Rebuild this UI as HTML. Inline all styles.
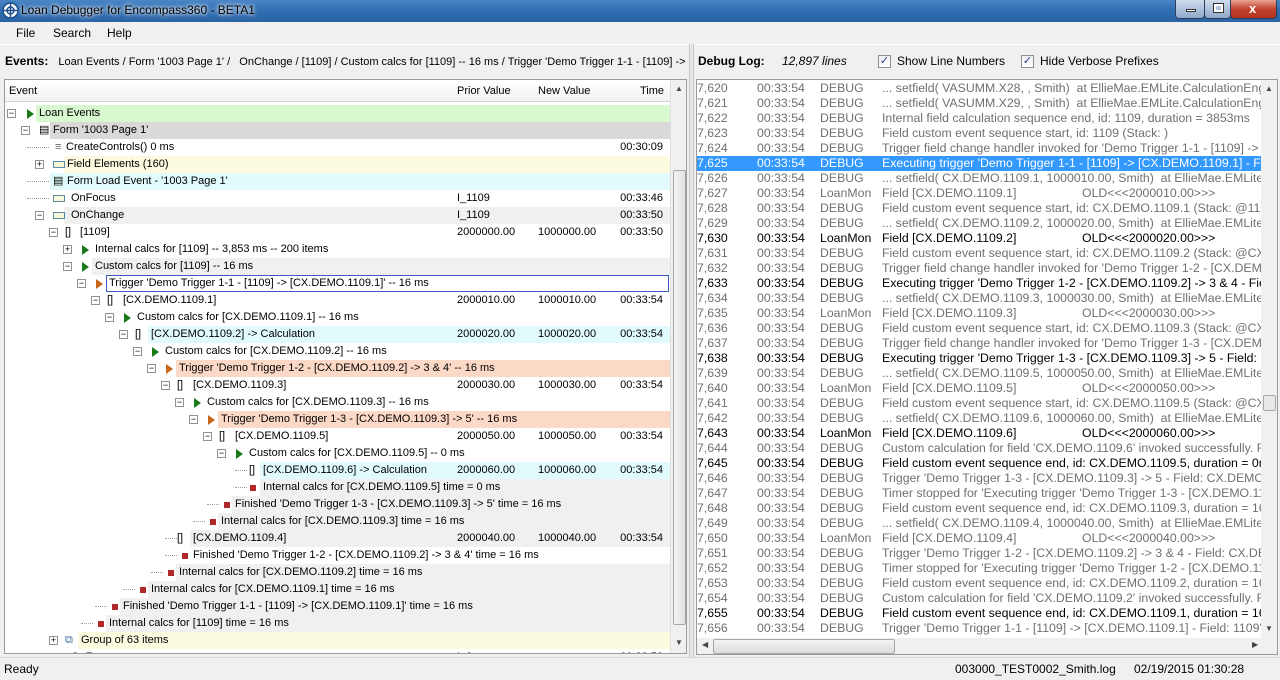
<!DOCTYPE html>
<html><head><meta charset="utf-8"><style>
*{margin:0;padding:0;box-sizing:border-box}
body{width:1280px;height:680px;overflow:hidden;background:#f0f0f0;font-family:"Liberation Sans",sans-serif;font-size:12px;color:#000;position:relative}
.abs{position:absolute}
#title{left:0;top:0;width:1280px;height:22px;background:linear-gradient(#4a86c6,#2f6cb0 50%,#2a64a6);color:#000}
#title .t{position:absolute;left:21px;top:3px;font-size:12px;color:#000;text-shadow:0 0 6px #fff,0 0 3px #fff}
.wb{position:absolute;top:0;height:19px;border:1px solid #2b3f5c;border-top:none;border-radius:0 0 4px 4px;background:linear-gradient(#cfdcec,#8fa9c9);}
#menu{left:0;top:22px;width:1280px;height:22px;}
#menu span{position:absolute;top:4px;font-size:12px}
.tree{left:4px;top:79px;width:683px;height:575px;background:#fff;border:1px solid #9a9a9a;overflow:hidden;font-size:11px}
.hdr{position:absolute;left:0;top:0;width:665px;height:22px;background:linear-gradient(#fff,#f2f2f2);border-bottom:1px solid #d5d5d5}
.hdr span{position:absolute;top:5px}
.r{position:absolute;left:0;width:665px;height:17px;line-height:17px;white-space:nowrap}
.bg{position:absolute;top:0;height:17px;right:0}
.bx{position:absolute;top:4px;width:9px;height:9px;border:1px solid #919191;background:#fff;font-size:9px;line-height:6px;text-align:center;color:#000}
.tx{position:absolute;top:0}
.gt{position:absolute;top:4px;width:0;height:0;border-top:5px solid transparent;border-bottom:5px solid transparent;border-left:7px solid #1a7a1a}
.ot{position:absolute;top:4px;width:0;height:0;border-top:5px solid transparent;border-bottom:5px solid transparent;border-left:7px solid #c8661a}
.rs{position:absolute;top:6px;width:6px;height:6px;background:#b0282a}
.c1{position:absolute;left:452px}.c2{position:absolute;left:533px}.c3{position:absolute;right:7px}
.dl{position:absolute;top:8px;height:0;border-top:1px dotted #a0a0a0}
.vs{position:absolute;left:665px;top:0;width:17px;height:573px;background:#f0f0f0;border-left:1px solid #e0e0e0}
.log{left:696px;top:79px;width:582px;height:576px;background:#fff;border:1px solid #9a9a9a;overflow:hidden;font-size:12.3px}
.lr{position:absolute;left:0;width:564px;height:15px;line-height:15px;white-space:nowrap;color:#707070;overflow:hidden}
.lr span{position:absolute}
.lr .a{left:0}.lr .b{left:60px}.lr .c{left:123px}.lr .d{left:185px}
.dk{color:#000}
.sel{background:#3399ff;color:#fff}
.cb{position:absolute;top:55px;width:13px;height:13px;border:1px solid #8f8f8f;background:linear-gradient(#eee,#fff);font-size:11px;line-height:11px;text-align:center;color:#233f8f}
</style></head><body>
<div id="title" class="abs">
<svg class="abs" style="left:2px;top:2px" width="17" height="17" viewBox="0 0 17 17"><circle cx="8.5" cy="8.5" r="7.5" fill="#fff" stroke="#1d4f8c" stroke-width="1.5"/><circle cx="8.5" cy="8.5" r="3.5" fill="none" stroke="#1d4f8c" stroke-width="1.5"/><path d="M8.5 1v15M1 8.5h15" stroke="#1d4f8c" stroke-width="1.5"/></svg>
<span class="t">Loan Debugger for Encompass360 - BETA1</span>
<div class="wb" style="left:1175px;width:30px"><div style="position:absolute;left:10px;top:9px;width:10px;height:3px;background:#fff;border:1px solid #333"></div></div>
<div class="wb" style="left:1204px;width:27px"><div style="position:absolute;left:9px;top:4px;width:9px;height:8px;border:2px solid #fff;outline:1px solid #333"></div></div>
<div class="wb" style="left:1230px;width:47px;background:linear-gradient(#e8a593,#c4412c 50%,#b23420)"><span style="position:absolute;left:18px;top:1px;color:#fff;font-weight:bold;font-size:13px">x</span></div>
</div>
<div id="menu" class="abs"><span style="left:16px">File</span><span style="left:53px">Search</span><span style="left:107px">Help</span></div>
<div class="abs" style="left:0;top:44px;width:1280px;height:1px;background:#fff"></div>
<div class="abs" style="left:5px;top:54px;white-space:nowrap;width:680px;overflow:hidden"><b style="font-size:12px">Events:</b>&nbsp;&nbsp; <span style="font-size:11px">Loan Events / Form '1003 Page 1' /&nbsp;&nbsp; OnChange / [1109] / Custom calcs for [1109] -- 16 ms / Trigger 'Demo Trigger 1-1 - [1109] -&gt; [C</span></div>
<div class="abs" style="left:698px;top:54px;white-space:nowrap"><b>Debug Log:</b></div>
<div class="abs" style="left:782px;top:54px;font-style:italic">12,897 lines</div>
<div class="cb" style="left:878px">✓</div><div class="abs" style="left:897px;top:54px">Show Line Numbers</div>
<div class="cb" style="left:1021px">✓</div><div class="abs" style="left:1040px;top:54px">Hide Verbose Prefixes</div>
<div class="abs" style="left:689px;top:44px;width:5px;height:614px;background:#e6e6e6;border-left:1px solid #c8c8c8;border-right:1px solid #c8c8c8"></div>

<div class="tree abs">
<div class="hdr"><span style="left:4px">Event</span><span style="left:452px">Prior Value</span><span style="left:533px">New Value</span><span style="right:6px">Time</span></div>
<div style="position:absolute;left:0;top:-79px">
<div class="r" style="top:104px"><div class="bg" style="left:31px;background:#d8f8d0"></div><div class="bx" style="left:2px">−</div><div class="gt" style="left:22px"></div><span class="tx" style="left:34px">Loan Events</span></div>
<div class="r" style="top:121px"><div class="bg" style="left:45px;background:#d9d9d9"></div><div class="bx" style="left:16px">−</div><span class="tx" style="left:34px">▤</span><span class="tx" style="left:48px">Form '1003 Page 1'</span></div>
<div class="r" style="top:138px"><div class="dl" style="left:22px;width:22px"></div><span class="tx" style="left:50px;color:#666">≡</span><span class="tx" style="left:61px">CreateControls() 0 ms</span><span class="c3">00:30:09</span></div>
<div class="r" style="top:155px"><div class="bg" style="left:59px;background:#fdfbdf"></div><div class="bx" style="left:30px">+</div><div style="position:absolute;left:48px;top:5px;width:12px;height:7px;border:1px solid #5a8aa8;background:#f8f8d8"></div><span class="tx" style="left:62px">Field Elements (160)</span></div>
<div class="r" style="top:172px"><div class="bg" style="left:45px;background:#e1fbfc"></div><div class="dl" style="left:22px;width:22px"></div><span class="tx" style="left:48px">▤</span><span class="tx" style="left:62px">Form Load Event - '1003 Page 1'</span></div>
<div class="r" style="top:189px"><div class="dl" style="left:22px;width:22px"></div><div style="position:absolute;left:48px;top:5px;width:12px;height:7px;border:1px solid #5a8aa8;background:#f8f8d8"></div><span class="tx" style="left:66px">OnFocus</span><span class="c1">I_1109</span><span class="c3">00:33:46</span></div>
<div class="r" style="top:206px"><div class="bg" style="left:59px;background:#f0f0f0"></div><div class="bx" style="left:30px">−</div><div style="position:absolute;left:48px;top:5px;width:12px;height:7px;border:1px solid #5a8aa8;background:#f8f8d8"></div><span class="tx" style="left:66px">OnChange</span><span class="c1">I_1109</span><span class="c3">00:33:50</span></div>
<div class="r" style="top:223px"><div class="bx" style="left:44px">−</div><span class="tx" style="left:60px">[]</span><span class="tx" style="left:75px">[1109]</span><span class="c1">2000000.00</span><span class="c2">1000000.00</span><span class="c3">00:33:50</span></div>
<div class="r" style="top:240px"><div class="bx" style="left:58px">+</div><div class="gt" style="left:77px"></div><span class="tx" style="left:90px">Internal calcs for [1109] -- 3,853 ms -- 200 items</span></div>
<div class="r" style="top:257px"><div class="bg" style="left:87px;background:#f0f0f0"></div><div class="bx" style="left:58px">−</div><div class="gt" style="left:77px"></div><span class="tx" style="left:90px">Custom calcs for [1109] -- 16 ms</span></div>
<div class="r" style="top:274px"><div class="bg" style="left:101px;right:1px;border:1px solid #3a5bbf;background:#fff"></div><div class="bx" style="left:72px">−</div><div class="ot" style="left:91px"></div><span class="tx" style="left:104px">Trigger 'Demo Trigger 1-1 - [1109] -&gt; [CX.DEMO.1109.1]' -- 16 ms</span></div>
<div class="r" style="top:291px"><div class="bx" style="left:86px">−</div><span class="tx" style="left:102px">[]</span><span class="tx" style="left:118px">[CX.DEMO.1109.1]</span><span class="c1">2000010.00</span><span class="c2">1000010.00</span><span class="c3">00:33:54</span></div>
<div class="r" style="top:308px"><div class="bx" style="left:100px">−</div><div class="gt" style="left:119px"></div><span class="tx" style="left:132px">Custom calcs for [CX.DEMO.1109.1] -- 16 ms</span></div>
<div class="r" style="top:325px"><div class="bg" style="left:143px;background:#e1fbfc"></div><div class="bx" style="left:114px">−</div><span class="tx" style="left:130px">[]</span><span class="tx" style="left:146px">[CX.DEMO.1109.2] -&gt; Calculation</span><span class="c1">2000020.00</span><span class="c2">1000020.00</span><span class="c3">00:33:54</span></div>
<div class="r" style="top:342px"><div class="bx" style="left:128px">−</div><div class="gt" style="left:147px"></div><span class="tx" style="left:160px">Custom calcs for [CX.DEMO.1109.2] -- 16 ms</span></div>
<div class="r" style="top:359px"><div class="bg" style="left:171px;background:#fcd9c6"></div><div class="bx" style="left:142px">−</div><div class="ot" style="left:161px"></div><span class="tx" style="left:174px">Trigger 'Demo Trigger 1-2 - [CX.DEMO.1109.2] -&gt; 3 &amp; 4' -- 16 ms</span></div>
<div class="r" style="top:376px"><div class="bx" style="left:156px">−</div><span class="tx" style="left:172px">[]</span><span class="tx" style="left:188px">[CX.DEMO.1109.3]</span><span class="c1">2000030.00</span><span class="c2">1000030.00</span><span class="c3">00:33:54</span></div>
<div class="r" style="top:393px"><div class="bx" style="left:170px">−</div><div class="gt" style="left:189px"></div><span class="tx" style="left:202px">Custom calcs for [CX.DEMO.1109.3] -- 16 ms</span></div>
<div class="r" style="top:410px"><div class="bg" style="left:213px;background:#fcd9c6"></div><div class="bx" style="left:184px">−</div><div class="ot" style="left:203px"></div><span class="tx" style="left:216px">Trigger 'Demo Trigger 1-3 - [CX.DEMO.1109.3] -&gt; 5' -- 16 ms</span></div>
<div class="r" style="top:427px"><div class="bx" style="left:198px">−</div><span class="tx" style="left:214px">[]</span><span class="tx" style="left:230px">[CX.DEMO.1109.5]</span><span class="c1">2000050.00</span><span class="c2">1000050.00</span><span class="c3">00:33:54</span></div>
<div class="r" style="top:444px"><div class="bx" style="left:212px">−</div><div class="gt" style="left:231px"></div><span class="tx" style="left:244px">Custom calcs for [CX.DEMO.1109.5] -- 0 ms</span></div>
<div class="r" style="top:461px"><div class="bg" style="left:255px;background:#e1fbfc"></div><div class="dl" style="left:230px;width:12px"></div><span class="tx" style="left:244px">[]</span><span class="tx" style="left:258px">[CX.DEMO.1109.6] -&gt; Calculation</span><span class="c1">2000060.00</span><span class="c2">1000060.00</span><span class="c3">00:33:54</span></div>
<div class="r" style="top:478px"><div class="bg" style="left:255px;background:#f0f0f0"></div><div class="dl" style="left:230px;width:12px"></div><div class="rs" style="left:245px"></div><span class="tx" style="left:258px">Internal calcs for [CX.DEMO.1109.5] time = 0 ms</span></div>
<div class="r" style="top:495px"><div class="bg" style="left:227px;background:#f0f0f0"></div><div class="dl" style="left:202px;width:12px"></div><div class="rs" style="left:219px"></div><span class="tx" style="left:230px">Finished 'Demo Trigger 1-3 - [CX.DEMO.1109.3] -&gt; 5' time = 16 ms</span></div>
<div class="r" style="top:512px"><div class="bg" style="left:213px;background:#f0f0f0"></div><div class="dl" style="left:188px;width:12px"></div><div class="rs" style="left:205px"></div><span class="tx" style="left:216px">Internal calcs for [CX.DEMO.1109.3] time = 16 ms</span></div>
<div class="r" style="top:529px"><div class="bg" style="left:185px;background:#f0f0f0"></div><div class="dl" style="left:160px;width:12px"></div><span class="tx" style="left:172px">[]</span><span class="tx" style="left:188px">[CX.DEMO.1109.4]</span><span class="c1">2000040.00</span><span class="c2">1000040.00</span><span class="c3">00:33:54</span></div>
<div class="r" style="top:546px"><div class="dl" style="left:160px;width:12px"></div><div class="rs" style="left:177px"></div><span class="tx" style="left:188px">Finished 'Demo Trigger 1-2 - [CX.DEMO.1109.2] -&gt; 3 &amp; 4' time = 16 ms</span></div>
<div class="r" style="top:563px"><div class="bg" style="left:171px;background:#f0f0f0"></div><div class="dl" style="left:146px;width:12px"></div><div class="rs" style="left:163px"></div><span class="tx" style="left:174px">Internal calcs for [CX.DEMO.1109.2] time = 16 ms</span></div>
<div class="r" style="top:580px"><div class="bg" style="left:143px;background:#f0f0f0"></div><div class="dl" style="left:118px;width:12px"></div><div class="rs" style="left:135px"></div><span class="tx" style="left:146px">Internal calcs for [CX.DEMO.1109.1] time = 16 ms</span></div>
<div class="r" style="top:597px"><div class="bg" style="left:115px;background:#f0f0f0"></div><div class="dl" style="left:90px;width:12px"></div><div class="rs" style="left:107px"></div><span class="tx" style="left:118px">Finished 'Demo Trigger 1-1 - [1109] -&gt; [CX.DEMO.1109.1]' time = 16 ms</span></div>
<div class="r" style="top:614px"><div class="bg" style="left:101px;background:#f0f0f0"></div><div class="dl" style="left:76px;width:12px"></div><div class="rs" style="left:93px"></div><span class="tx" style="left:104px">Internal calcs for [1109] time = 16 ms</span></div>
<div class="r" style="top:631px"><div class="bg" style="left:73px;background:#fdfbdf"></div><div class="bx" style="left:44px">+</div><span class="tx" style="left:60px;color:#3a6aa0">⧉</span><span class="tx" style="left:76px">Group of 63 items</span></div>
<div class="r" style="top:648px"><div style="position:absolute;left:48px;top:5px;width:12px;height:7px;border:1px solid #5a8aa8;background:#f8f8d8"></div><span class="tx" style="left:66px">OnF</span><span class="c1">I_2</span><span class="c3">00:33:56</span></div>
</div>
<div class="vs"><div style="position:absolute;left:2px;top:90px;width:13px;height:455px;background:linear-gradient(90deg,#f4f4f4,#e2e2e2);border:1px solid #a8a8a8;border-radius:2px"></div><span style="position:absolute;left:4px;top:4px;font-size:8px;color:#444">▲</span><span style="position:absolute;left:4px;top:558px;font-size:8px;color:#444">▼</span></div>
</div>

<div class="log abs">
<div style="position:absolute;left:0;top:1px">
<div class="lr" style="top:0px"><span class="a">7,620</span><span class="b">00:33:54</span><span class="c">DEBUG</span><span class="d">... setfield( VASUMM.X28, , Smith)&nbsp; at EllieMae.EMLite.CalculationEngi</span></div>
<div class="lr" style="top:15px"><span class="a">7,621</span><span class="b">00:33:54</span><span class="c">DEBUG</span><span class="d">... setfield( VASUMM.X29, , Smith)&nbsp; at EllieMae.EMLite.CalculationEngi</span></div>
<div class="lr" style="top:30px"><span class="a">7,622</span><span class="b">00:33:54</span><span class="c">DEBUG</span><span class="d">Internal field calculation sequence end, id: 1109, duration = 3853ms</span></div>
<div class="lr" style="top:45px"><span class="a">7,623</span><span class="b">00:33:54</span><span class="c">DEBUG</span><span class="d">Field custom event sequence start, id: 1109 (Stack: )</span></div>
<div class="lr" style="top:60px"><span class="a">7,624</span><span class="b">00:33:54</span><span class="c">DEBUG</span><span class="d">Trigger field change handler invoked for 'Demo Trigger 1-1 - [1109] -&gt; [</span></div>
<div class="lr sel" style="top:75px"><span class="a">7,625</span><span class="b">00:33:54</span><span class="c">DEBUG</span><span class="d">Executing trigger 'Demo Trigger 1-1 - [1109] -&gt; [CX.DEMO.1109.1] - Fi</span></div>
<div class="lr" style="top:90px"><span class="a">7,626</span><span class="b">00:33:54</span><span class="c">DEBUG</span><span class="d">... setfield( CX.DEMO.1109.1, 1000010.00, Smith)&nbsp; at EllieMae.EMLite.</span></div>
<div class="lr" style="top:105px"><span class="a">7,627</span><span class="b">00:33:54</span><span class="c">LoanMon</span><span class="d">Field [CX.DEMO.1109.1]</span><span style="left:385px">OLD&lt;&lt;&lt;2000010.00&gt;&gt;&gt;</span></div>
<div class="lr" style="top:120px"><span class="a">7,628</span><span class="b">00:33:54</span><span class="c">DEBUG</span><span class="d">Field custom event sequence start, id: CX.DEMO.1109.1 (Stack: @110</span></div>
<div class="lr" style="top:135px"><span class="a">7,629</span><span class="b">00:33:54</span><span class="c">DEBUG</span><span class="d">... setfield( CX.DEMO.1109.2, 1000020.00, Smith)&nbsp; at EllieMae.EMLite.</span></div>
<div class="lr dk" style="top:150px"><span class="a">7,630</span><span class="b">00:33:54</span><span class="c">LoanMon</span><span class="d">Field [CX.DEMO.1109.2]</span><span style="left:385px">OLD&lt;&lt;&lt;2000020.00&gt;&gt;&gt;</span></div>
<div class="lr" style="top:165px"><span class="a">7,631</span><span class="b">00:33:54</span><span class="c">DEBUG</span><span class="d">Field custom event sequence start, id: CX.DEMO.1109.2 (Stack: @CX</span></div>
<div class="lr" style="top:180px"><span class="a">7,632</span><span class="b">00:33:54</span><span class="c">DEBUG</span><span class="d">Trigger field change handler invoked for 'Demo Trigger 1-2 - [CX.DEMO.</span></div>
<div class="lr dk" style="top:195px"><span class="a">7,633</span><span class="b">00:33:54</span><span class="c">DEBUG</span><span class="d">Executing trigger 'Demo Trigger 1-2 - [CX.DEMO.1109.2] -&gt; 3 &amp; 4 - Fie</span></div>
<div class="lr" style="top:210px"><span class="a">7,634</span><span class="b">00:33:54</span><span class="c">DEBUG</span><span class="d">... setfield( CX.DEMO.1109.3, 1000030.00, Smith)&nbsp; at EllieMae.EMLite.</span></div>
<div class="lr" style="top:225px"><span class="a">7,635</span><span class="b">00:33:54</span><span class="c">LoanMon</span><span class="d">Field [CX.DEMO.1109.3]</span><span style="left:385px">OLD&lt;&lt;&lt;2000030.00&gt;&gt;&gt;</span></div>
<div class="lr" style="top:240px"><span class="a">7,636</span><span class="b">00:33:54</span><span class="c">DEBUG</span><span class="d">Field custom event sequence start, id: CX.DEMO.1109.3 (Stack: @CX</span></div>
<div class="lr" style="top:255px"><span class="a">7,637</span><span class="b">00:33:54</span><span class="c">DEBUG</span><span class="d">Trigger field change handler invoked for 'Demo Trigger 1-3 - [CX.DEMO.</span></div>
<div class="lr dk" style="top:270px"><span class="a">7,638</span><span class="b">00:33:54</span><span class="c">DEBUG</span><span class="d">Executing trigger 'Demo Trigger 1-3 - [CX.DEMO.1109.3] -&gt; 5 - Field: C</span></div>
<div class="lr" style="top:285px"><span class="a">7,639</span><span class="b">00:33:54</span><span class="c">DEBUG</span><span class="d">... setfield( CX.DEMO.1109.5, 1000050.00, Smith)&nbsp; at EllieMae.EMLite.</span></div>
<div class="lr" style="top:300px"><span class="a">7,640</span><span class="b">00:33:54</span><span class="c">LoanMon</span><span class="d">Field [CX.DEMO.1109.5]</span><span style="left:385px">OLD&lt;&lt;&lt;2000050.00&gt;&gt;&gt;</span></div>
<div class="lr" style="top:315px"><span class="a">7,641</span><span class="b">00:33:54</span><span class="c">DEBUG</span><span class="d">Field custom event sequence start, id: CX.DEMO.1109.5 (Stack: @CX</span></div>
<div class="lr" style="top:330px"><span class="a">7,642</span><span class="b">00:33:54</span><span class="c">DEBUG</span><span class="d">... setfield( CX.DEMO.1109.6, 1000060.00, Smith)&nbsp; at EllieMae.EMLite.</span></div>
<div class="lr dk" style="top:345px"><span class="a">7,643</span><span class="b">00:33:54</span><span class="c">LoanMon</span><span class="d">Field [CX.DEMO.1109.6]</span><span style="left:385px">OLD&lt;&lt;&lt;2000060.00&gt;&gt;&gt;</span></div>
<div class="lr" style="top:360px"><span class="a">7,644</span><span class="b">00:33:54</span><span class="c">DEBUG</span><span class="d">Custom calculation for field 'CX.DEMO.1109.6' invoked successfully. F</span></div>
<div class="lr dk" style="top:375px"><span class="a">7,645</span><span class="b">00:33:54</span><span class="c">DEBUG</span><span class="d">Field custom event sequence end, id: CX.DEMO.1109.5, duration = 0r</span></div>
<div class="lr" style="top:390px"><span class="a">7,646</span><span class="b">00:33:54</span><span class="c">DEBUG</span><span class="d">Trigger 'Demo Trigger 1-3 - [CX.DEMO.1109.3] -&gt; 5 - Field: CX.DEMO.</span></div>
<div class="lr" style="top:405px"><span class="a">7,647</span><span class="b">00:33:54</span><span class="c">DEBUG</span><span class="d">Timer stopped for 'Executing trigger 'Demo Trigger 1-3 - [CX.DEMO.11</span></div>
<div class="lr" style="top:420px"><span class="a">7,648</span><span class="b">00:33:54</span><span class="c">DEBUG</span><span class="d">Field custom event sequence end, id: CX.DEMO.1109.3, duration = 16</span></div>
<div class="lr" style="top:435px"><span class="a">7,649</span><span class="b">00:33:54</span><span class="c">DEBUG</span><span class="d">... setfield( CX.DEMO.1109.4, 1000040.00, Smith)&nbsp; at EllieMae.EMLite.</span></div>
<div class="lr" style="top:450px"><span class="a">7,650</span><span class="b">00:33:54</span><span class="c">LoanMon</span><span class="d">Field [CX.DEMO.1109.4]</span><span style="left:385px">OLD&lt;&lt;&lt;2000040.00&gt;&gt;&gt;</span></div>
<div class="lr" style="top:465px"><span class="a">7,651</span><span class="b">00:33:54</span><span class="c">DEBUG</span><span class="d">Trigger 'Demo Trigger 1-2 - [CX.DEMO.1109.2] -&gt; 3 &amp; 4 - Field: CX.DE</span></div>
<div class="lr" style="top:480px"><span class="a">7,652</span><span class="b">00:33:54</span><span class="c">DEBUG</span><span class="d">Timer stopped for 'Executing trigger 'Demo Trigger 1-2 - [CX.DEMO.11</span></div>
<div class="lr" style="top:495px"><span class="a">7,653</span><span class="b">00:33:54</span><span class="c">DEBUG</span><span class="d">Field custom event sequence end, id: CX.DEMO.1109.2, duration = 16</span></div>
<div class="lr" style="top:510px"><span class="a">7,654</span><span class="b">00:33:54</span><span class="c">DEBUG</span><span class="d">Custom calculation for field 'CX.DEMO.1109.2' invoked successfully. F</span></div>
<div class="lr dk" style="top:525px"><span class="a">7,655</span><span class="b">00:33:54</span><span class="c">DEBUG</span><span class="d">Field custom event sequence end, id: CX.DEMO.1109.1, duration = 16</span></div>
<div class="lr" style="top:540px"><span class="a">7,656</span><span class="b">00:33:54</span><span class="c">DEBUG</span><span class="d">Trigger 'Demo Trigger 1-1 - [1109] -&gt; [CX.DEMO.1109.1] - Field: 1109'</span></div>
</div>
<div style="position:absolute;left:564px;top:0;width:17px;height:558px;background:#f0f0f0"><span style="position:absolute;left:4px;top:4px;font-size:8px;color:#444">▲</span><div style="position:absolute;left:2px;top:315px;width:13px;height:16px;background:#e8e8e8;border:1px solid #a8a8a8;border-radius:2px"></div><span style="position:absolute;left:4px;top:544px;font-size:8px;color:#444">▼</span></div>
<div style="position:absolute;left:0;top:558px;width:581px;height:17px;background:#f0f0f0"><span style="position:absolute;left:5px;top:2px;font-size:8px;color:#444">◀</span><div style="position:absolute;left:16px;top:1px;width:182px;height:15px;background:linear-gradient(#f4f4f4,#dcdcdc);border:1px solid #a8a8a8;border-radius:2px"></div><span style="position:absolute;left:555px;top:2px;font-size:8px;color:#444">▶</span></div>
</div>

<div class="abs" style="left:0;top:657px;width:1280px;height:23px;background:#f0f0f0;border-top:1px solid #d8d8d8"></div>
<div class="abs" style="left:4px;top:662px">Ready</div>
<div class="abs" style="left:955px;top:662px">003000_TEST0002_Smith.log</div>
<div class="abs" style="left:1134px;top:662px">02/19/2015 01:30:28</div>
</body></html>
